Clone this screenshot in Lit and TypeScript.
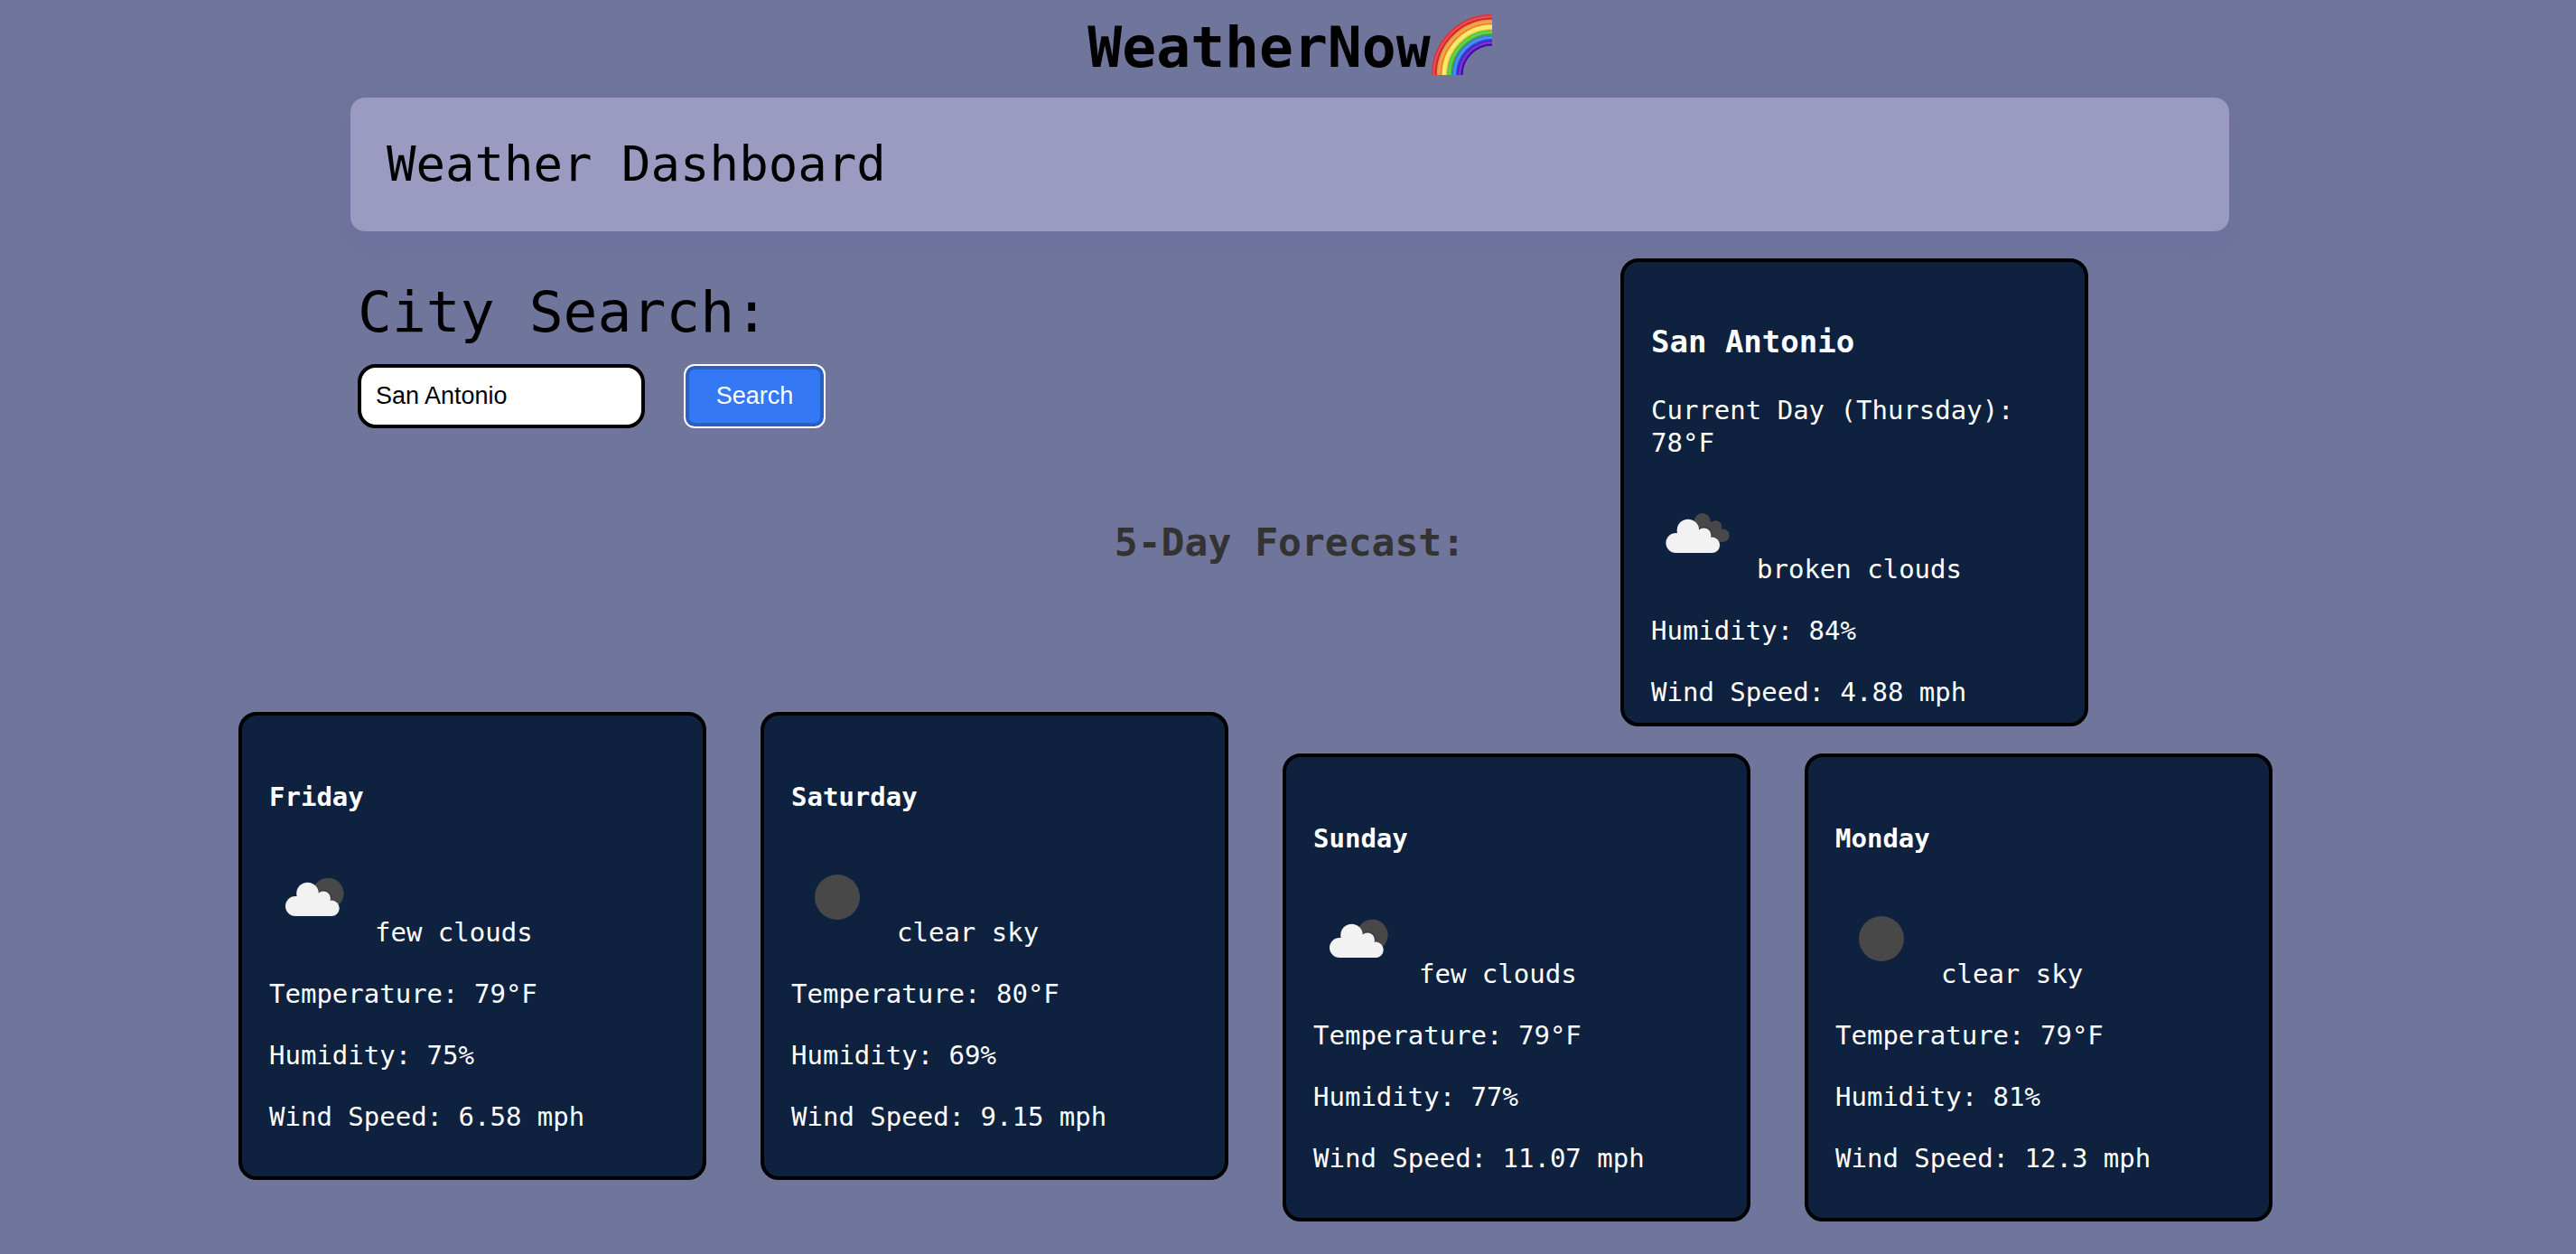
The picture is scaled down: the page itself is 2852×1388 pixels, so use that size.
import { LitElement, html, svg, css } from "lit";
import { customElement, property, state } from "lit/decorators.js";

type Sky = "few clouds" | "broken clouds" | "clear sky";

interface Report {
  title: string;
  sky: Sky;
  lines: string[];
}

const current: Report & { summary: string } = {
  title: "San Antonio",
  summary: "Current Day (Thursday): 78°F",
  sky: "broken clouds",
  lines: ["Humidity: 84%", "Wind Speed: 4.88 mph"],
};

const forecast: Report[] = [
  { title: "Friday", sky: "few clouds", lines: ["Temperature: 79°F", "Humidity: 75%", "Wind Speed: 6.58 mph"] },
  { title: "Saturday", sky: "clear sky", lines: ["Temperature: 80°F", "Humidity: 69%", "Wind Speed: 9.15 mph"] },
  { title: "Sunday", sky: "few clouds", lines: ["Temperature: 79°F", "Humidity: 77%", "Wind Speed: 11.07 mph"] },
  { title: "Monday", sky: "clear sky", lines: ["Temperature: 79°F", "Humidity: 81%", "Wind Speed: 12.3 mph"] },
];

const cloud = svg`
  <g fill="#f2f2f2">
    <circle cx="29" cy="61" r="11" />
    <circle cx="42.500" cy="47" r="12.300" />
    <circle cx="60" cy="52.500" r="8" />
    <circle cx="69" cy="63.300" r="8.700" />
    <rect x="29" y="50" width="32" height="22" />
    <rect x="52" y="58" width="17" height="14" />
  </g>`;

const icons = {
  "clear sky": svg`<circle cx="51" cy="51" r="25" fill="#484849" />`,
  "few clouds": svg`
    <circle cx="65.300" cy="47" r="17.300" fill="#484849" />
    <circle cx="60.500" cy="52" r="9" fill="#2e3036" opacity="0.500" />
    ${cloud}`,
  "broken clouds": svg`
    <g fill="#484849">
      <circle cx="56.700" cy="37" r="9" />
      <circle cx="71.700" cy="43" r="6.700" />
      <circle cx="79.500" cy="52.700" r="7.200" />
      <path d="M50 40L64 36L72 42L80 52L78 60L62 58Z" />
    </g>
    <circle cx="58.500" cy="51.500" r="9" fill="#2e3036" opacity="0.500" />
    <g transform="translate(-1.600 0)">${cloud}</g>`,
};

@customElement("weather-card")
export class WeatherCard extends LitElement {
  @property({ attribute: false }) report!: Report & { summary?: string };

  static styles = css`
    :host {
      display: block;
      box-sizing: border-box;
      width: 518px;
      height: 518px;
      padding: 30px;
      border: 4px solid #000;
      border-radius: 20px;
      background: #0e213e;
      color: #fff;
      font: 29px/36px "DejaVu Sans Mono", monospace;
    }
    .day,
    .city {
      margin: 42px 0;
      font-size: 29px;
      font-weight: 700;
      line-height: 36px;
    }
    .city {
      margin: 36px 0;
      font-size: 34px;
      line-height: 44px;
    }
    p {
      margin: 0 0 32px;
    }
    .sky {
      display: flex;
      align-items: last baseline;
      gap: 17px;
    }
    .icon {
      width: 100px;
      height: 100px;
    }
  `;

  render() {
    const { title, summary, sky, lines } = this.report;
    return html`
      ${summary
        ? html`<h3 class="city">${title}</h3>
            <p>${summary}</p>`
        : html`<h4 class="day">${title}</h4>`}
      <p class="sky">
        <svg class="icon" viewBox="0 0 100 100" aria-hidden="true">${icons[sky]}</svg>
        <span>${sky}</span>
      </p>
      ${lines.map((line) => html`<p>${line}</p>`)}
    `;
  }
}

@customElement("app-root")
export class AppRoot extends LitElement {
  @state() private city = "San Antonio";

  static styles = css`
    :host {
      display: block;
      min-height: 100vh;
      box-sizing: border-box;
      padding: 0 0 36px 4px;
      background: #70759b;
      color: #000;
      font-family: "DejaVu Sans Mono", monospace;
      overflow: hidden;
    }
    .brand {
      display: flex;
      justify-content: center;
      align-items: flex-start;
      height: 108px;
      padding-top: 15px;
      box-sizing: border-box;
      margin: 0;
      font-size: 63px;
      font-weight: 700;
      line-height: 76px;
    }
    .rainbow {
      width: 68px;
      height: 68px;
    }
    .banner,
    .overview {
      max-width: 2080px;
      margin: 0 auto;
      box-sizing: border-box;
    }
    .banner {
      padding: 42px 40px;
      border-radius: 16px;
      background: #9b9ac1;
      box-shadow: 0 16px 32px rgba(106, 102, 172, 0.3);
    }
    .banner h2 {
      margin: 0;
      font-size: 54px;
      font-weight: 400;
      line-height: 64px;
    }
    .overview {
      display: grid;
      grid-template-columns: minmax(0, 1fr) auto minmax(0, 1fr);
      align-items: start;
      padding: 30px 0;
    }
    .search {
      padding: 22px 8px;
    }
    .search label {
      display: block;
      font-size: 63px;
      line-height: 76px;
      margin-bottom: 19px;
      white-space: nowrap;
    }
    .controls {
      display: flex;
      align-items: center;
      gap: 45px;
    }
    input,
    button {
      box-sizing: border-box;
      font: 27px "Liberation Sans", sans-serif;
    }
    input {
      width: 318px;
      height: 71px;
      padding: 0 16px;
      border: 4px solid #000;
      border-radius: 20px;
      background: #fff;
      color: #000;
    }
    button {
      width: 153px;
      height: 67px;
      padding: 0;
      border: 4px solid #2860c6;
      border-radius: 10px;
      outline: 2px solid #fff;
      background: #3478f6;
      color: #fff;
    }
    .heading {
      margin: 286px 0 0;
      color: #333;
      font-size: 43px;
      font-weight: 700;
      line-height: 56px;
    }
    .current {
      justify-self: end;
      margin-right: 156px;
    }
    .forecast {
      display: flex;
      flex-wrap: wrap;
      align-items: flex-start;
      gap: 60px;
      padding-left: 260px;
    }
    .raised {
      margin-top: -46px;
    }
  `;

  private onInput(event: Event) {
    this.city = (event.target as HTMLInputElement).value;
  }

  private renderRainbow() {
    const bands = ["#e0343a", "#f2953a", "#fbe760", "#53c83c", "#3a7cf0", "#5b1fc8"];
    const shades = ["#b8282c", "#e07f2c", "#f3c84a", "#3aa52c", "#1d45d8", "#3f0ba0"];
    return html`<svg class="rainbow" viewBox="0 0 70 70" role="img" aria-label="rainbow">
      ${bands.map((color, i) => {
        const r = 66 - i * 5.9;
        const y = 70 - r;
        return svg`
          <path d="M${70 - r} 70A${r} ${r} 0 0 1 70 ${y}" fill="none" stroke=${color} stroke-width="6.200" />
          <path d="M${72.2 - r} 70A${r - 2.2} ${r - 2.2} 0 0 1 70 ${y + 2.2}" fill="none" stroke=${shades[i]} stroke-width="1.500" />
          <path d="M${69.5 - r} 70A${r + 0.5} ${r + 0.5} 0 0 1 70 ${y - 0.5}" fill="none" stroke="#fff" stroke-opacity="0.200" stroke-width="1.200" />`;
      })}
    </svg>`;
  }

  render() {
    return html`
      <h1 class="brand"><span>WeatherNow</span>${this.renderRainbow()}</h1>
      <header class="banner"><h2>Weather Dashboard</h2></header>
      <section class="overview">
        <form class="search" @submit=${(e: Event) => e.preventDefault()}>
          <label for="city">City Search:</label>
          <div class="controls">
            <input id="city" type="text" .value=${this.city} @input=${this.onInput} />
            <button type="submit">Search</button>
          </div>
        </form>
        <h2 class="heading">5-Day Forecast:</h2>
        <weather-card class="current" .report=${current}></weather-card>
      </section>
      <section class="forecast">
        ${forecast.map(
          (day, i) => html`<weather-card class=${i < 2 ? "raised" : ""} .report=${day}></weather-card>`
        )}
      </section>
    `;
  }
}
